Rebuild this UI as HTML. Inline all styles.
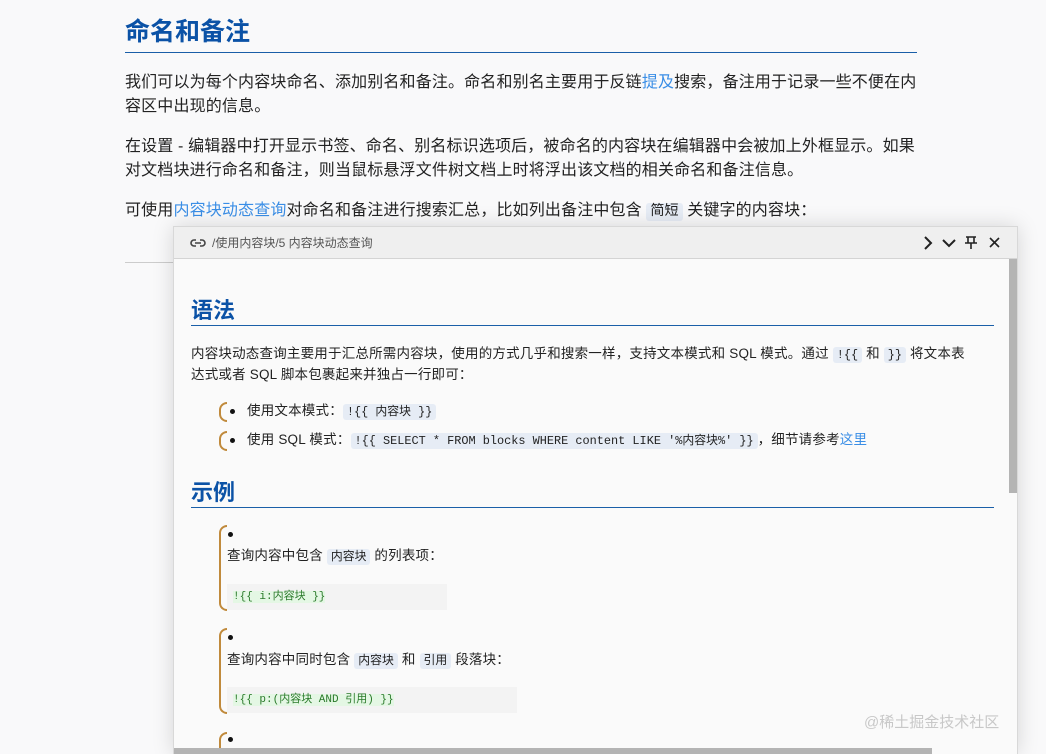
<!DOCTYPE html>
<html><head><meta charset="utf-8"><style>
*{margin:0;padding:0;box-sizing:border-box}
html,body{width:1046px;height:754px;overflow:hidden}
body{background:#f9f9fa;font-family:"Liberation Sans","Noto Sans CJK SC",sans-serif;color:#222;position:relative}
.main{position:absolute;left:125px;width:792px;top:0}
h1{position:absolute;top:15px;font-size:25px;color:#0b52a6;font-weight:bold;line-height:34px}
.hl{position:absolute;top:52px;left:0;width:792px;height:1px;background:#1a5fa8}
.p{position:absolute;left:0;font-size:16px;letter-spacing:.15px;line-height:24px;width:792px}
a{color:#3a8ee6;text-decoration:none}
code{font-family:"Liberation Mono","Noto Sans CJK SC",monospace;background:#e6ecf5;border-radius:3px;padding:1px 4px;font-size:88%;letter-spacing:0}
.pop{position:absolute;left:173px;top:226px;width:845px;height:528px;background:#fafafa;border:1px solid #d8d8d8;border-bottom:none;box-shadow:0 0 20px rgba(0,0,0,.15);overflow:hidden}
.ph{height:32px;background:#efefef;border-bottom:1px solid #d4d4d4;font-size:12px;color:#555;line-height:32px;padding-left:38px;position:relative}
.pc{position:absolute;font-size:13.5px;letter-spacing:.2px;line-height:20px}
h2{position:absolute;left:17px;font-size:22px;color:#0b52a6;font-weight:bold}
.ul{position:absolute;left:17px;width:803px;height:1px;background:#1a5fa8}
.br{position:absolute;width:8px;border:2px solid #c08a3c;border-right:none;border-radius:8px 0 0 8px}
.dot{position:absolute;width:5px;height:5px;border-radius:50%;background:#111}
.cb{position:absolute;left:53px;height:26px;background:#f3f3f3;font-family:"Liberation Mono","Noto Sans CJK SC",monospace;font-size:11px;line-height:26px;padding-left:6px;color:#2a7a2a}
.cb span{background:#e4f7e4}
</style></head><body>
<div class="main">
<h1>命名和备注</h1><div class="hl"></div>
<div class="p" style="top:71px">我们可以为每个内容块命名、添加别名和备注。命名和别名主要用于反链<a>提及</a>搜索，备注用于记录一些不便在内容区中出现的信息。</div>
<div class="p" style="top:135px">在设置 - 编辑器中打开显示书签、命名、别名标识选项后，被命名的内容块在编辑器中会被加上外框显示。如果对文档块进行命名和备注，则当鼠标悬浮文件树文档上时将浮出该文档的相关命名和备注信息。</div>
<div class="p" style="top:199px">可使用<a>内容块动态查询</a>对命名和备注进行搜索汇总，比如列出备注中包含 <code>简短</code> 关键字的内容块：</div>
<div style="position:absolute;top:262px;left:0;width:792px;height:1px;background:#ccc"></div>
</div>
<div class="pop">
<div class="ph"><svg style="position:absolute;left:16px;top:10px" width="16" height="12" viewBox="0 0 16 12"><path d="M6 3H4a3 3 0 0 0 0 6h2M10 3h2a3 3 0 0 1 0 6h-2M5 6h6" stroke="#444" stroke-width="1.6" fill="none"/></svg>/使用内容块/5 内容块动态查询
<svg style="position:absolute;left:748px;top:9px" width="80" height="14" viewBox="0 0 80 14"><path d="M3 1l6 6-6 6" stroke="#222" stroke-width="2" fill="none"/><path d="M21 4l6 6 6-6" stroke="#222" stroke-width="2" fill="none"/><path d="M44 1h10M46 1v6M52 1v6M43 7h12M49 7v6" stroke="#222" stroke-width="1.6" fill="none"/><path d="M68 2l9 9M77 2l-9 9" stroke="#222" stroke-width="1.6" fill="none"/></svg></div>
<h2 style="top:66px">语法</h2><div class="ul" style="top:98px"></div>
<div class="pc" style="left:17px;top:117px;width:782px">内容块动态查询主要用于汇总所需内容块，使用的方式几乎和搜索一样，支持文本模式和 SQL 模式。通过 <code>!{{</code> 和 <code>}}</code> 将文本表达式或者 SQL 脚本包裹起来并独占一行即可：</div>
<div class="br" style="left:45px;top:175px;height:20px"></div><div class="dot" style="left:56px;top:182px"></div>
<div class="pc" style="left:73px;top:174px">使用文本模式：<code>!{{ 内容块 }}</code></div>
<div class="br" style="left:45px;top:204px;height:20px"></div><div class="dot" style="left:56px;top:211px"></div>
<div class="pc" style="left:73px;top:203px">使用 SQL 模式：<code>!{{ SELECT * FROM blocks WHERE content LIKE '%内容块%' }}</code>，细节请参考<a>这里</a></div>
<h2 style="top:248px">示例</h2><div class="ul" style="top:280px"></div>
<div class="br" style="left:45px;top:298px;height:86px"></div><div class="dot" style="left:54px;top:305px"></div>
<div class="pc" style="left:53px;top:319px">查询内容中包含 <code>内容块</code> 的列表项：</div>
<div class="cb" style="top:357px;width:220px"><span>!{{ i:内容块 }}</span></div>
<div class="br" style="left:45px;top:401px;height:86px"></div><div class="dot" style="left:54px;top:408px"></div>
<div class="pc" style="left:53px;top:423px">查询内容中同时包含 <code>内容块</code> 和 <code>引用</code> 段落块：</div>
<div class="cb" style="top:460px;width:290px"><span>!{{ p:(内容块 AND 引用) }}</span></div>
<div class="br" style="left:45px;top:505px;height:40px"></div><div class="dot" style="left:54px;top:510px"></div>
<div style="position:absolute;left:835px;top:32px;width:9px;height:234px;background:#b4b4b4"></div>
<div style="position:absolute;left:0;top:521px;width:758px;height:8px;background:#b4b4b4"></div>
</div>
<div style="position:absolute;left:864px;top:711px;font-size:15px;color:#c8c8c8">@稀土掘金技术社区</div>
</body></html>
